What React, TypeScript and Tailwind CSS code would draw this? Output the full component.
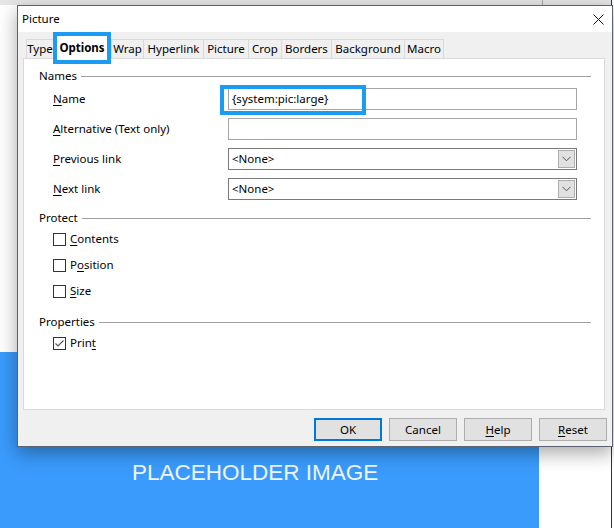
import React from "react";

const UI = "font-['Noto_Sans',sans-serif] text-[11.5px] leading-none text-black";

function U({ children }: { children: React.ReactNode }) {
  return <span className="underline underline-offset-2 decoration-1">{children}</span>;
}

function SectionHeader({ title }: { title: string }) {
  return (
    <div className="h-[16px] flex items-center pl-[15px] pr-[13px]">
      <span>{title}</span>
      <div className="flex-1 h-px bg-[#a0a0a0] ml-[4px]" />
    </div>
  );
}

function Chevron() {
  return (
    <svg width="9" height="6" viewBox="0 0 9 6">
      <path d="M0.5 0.8 L4.5 4.8 L8.5 0.8" fill="none" stroke="#555" strokeWidth="1" />
    </svg>
  );
}

function Row({ label, children }: { label: React.ReactNode; children: React.ReactNode }) {
  return (
    <div className="h-[22px] flex items-center">
      <div className="w-[204px] pl-[29px]">{label}</div>
      <div className="w-[349px] h-[22px] relative">{children}</div>
    </div>
  );
}

function TextBox({ value }: { value?: string }) {
  return (
    <div className="w-full h-full border border-[#a6a6a6] bg-white flex items-center pl-[3px]">{value}</div>
  );
}

function SelectBox({ value }: { value: string }) {
  return (
    <div className="w-full h-full border border-[#7a7a7a] bg-white flex items-center pl-[3px] pr-[1px]">
      <span className="flex-1">{value}</span>
      <div className="w-[17px] h-[18px] bg-[#e1e1e1] border border-[#adadad] flex items-center justify-center">
        <Chevron />
      </div>
    </div>
  );
}

function Check({ checked, label }: { checked?: boolean; label: React.ReactNode }) {
  return (
    <div className="h-[16px] flex items-center pl-[29px]">
      <div className="w-[13px] h-[13px] border border-[#333] bg-white flex items-center justify-center">
        {checked && (
          <svg width="11" height="11" viewBox="0 0 11 11">
            <path d="M1.5 5.5 L4 8 L9.5 2.5" fill="none" stroke="#555" strokeWidth="1.1" />
          </svg>
        )}
      </div>
      <span className="ml-[4px]">{label}</span>
    </div>
  );
}

function Tab({ w, children }: { w: number; children: React.ReactNode }) {
  return (
    <div
      className="h-[19px] border-t border-l border-[#d9d9d9] bg-[#f0f0f0] flex items-center justify-center last:border-r"
      style={{ width: w }}
    >
      {children}
    </div>
  );
}

function Button({ children, def }: { children: React.ReactNode; def?: boolean }) {
  return (
    <div
      className={
        def
          ? "w-[68px] h-[23px] bg-[#e1e1e1] border-2 border-[#0078d7] flex items-center justify-center"
          : "w-[68px] h-[23px] bg-[#e1e1e1] border border-[#adadad] flex items-center justify-center"
      }
    >
      {children}
    </div>
  );
}

function Dialog() {
  return (
    <div className={`absolute left-[17px] top-[5px] w-[596px] h-[442px] border border-[#5a6370] bg-[#f0f0f0] flex flex-col shadow-[0_6px_18px_rgba(0,0,0,0.35)] ${UI}`}>
      <div className="h-[26px] bg-white flex items-center pl-[4px] pr-[8px]">
        <span className="flex-1">Picture</span>
        <svg width="11" height="11" viewBox="0 0 11 11">
          <path d="M0.5 0.5 L10.5 10.5 M10.5 0.5 L0.5 10.5" stroke="#111" strokeWidth="1" />
        </svg>
      </div>
      <div className="flex-1 flex flex-col pl-[5px] pr-[7px] pt-[7px]">
        <div className="h-[19px] flex pl-[3px]">
          <Tab w={27}>Type</Tab>
          <div className="w-[58px] h-[19px] relative">
            <div className="absolute left-0 top-[-7px] w-[58px] h-[32px] border-[4px] border-[#1b9cf2] bg-white flex items-center justify-center z-10 font-bold">
              Options
            </div>
          </div>
          <Tab w={32}>Wrap</Tab>
          <Tab w={60}>Hyperlink</Tab>
          <Tab w={45}>Picture</Tab>
          <Tab w={33}>Crop</Tab>
          <Tab w={50}>Borders</Tab>
          <Tab w={73}>Background</Tab>
          <Tab w={40}>Macro</Tab>
        </div>
        <div className="h-[352px] border border-[#d9d9d9] bg-white flex flex-col pt-[9px]">
          <SectionHeader title="Names" />
          <div className="flex flex-col gap-[8px] mt-[4px]">
            <Row label={<><U>N</U>ame</>}>
              <TextBox value="{system:pic:large}" />
              <div className="absolute left-[-8px] top-[-3px] w-[146px] h-[30px] border-[4px] border-[#1b9cf2]" />
            </Row>
            <Row label={<><U>A</U>lternative (Text only)</>}>
              <TextBox />
            </Row>
            <Row label={<><U>P</U>revious link</>}>
              <SelectBox value="<None>" />
            </Row>
            <Row label={<><U>N</U>ext link</>}>
              <SelectBox value="<None>" />
            </Row>
          </div>
          <div className="mt-[10px]">
            <SectionHeader title="Protect" />
          </div>
          <div className="flex flex-col gap-[10px] mt-[5px]">
            <Check label={<><U>C</U>ontents</>} />
            <Check label={<>P<U>o</U>sition</>} />
            <Check label={<><U>S</U>ize</>} />
          </div>
          <div className="mt-[15px]">
            <SectionHeader title="Properties" />
          </div>
          <div className="mt-[5px]">
            <Check checked label={<>Prin<U>t</U></>} />
          </div>
        </div>
        <div className="flex justify-end gap-[7px] mt-[8px] mr-[-2px]">
          <Button def>OK</Button>
          <Button>Cancel</Button>
          <Button><U>H</U>elp</Button>
          <Button><U>R</U>eset</Button>
        </div>
      </div>
    </div>
  );
}

export default function App() {
  return (
    <div className="w-[614px] h-[528px] flex bg-white relative overflow-hidden">
      <div className="w-[611px] flex flex-col">
        <div className="h-[5px] bg-[#e6e6e6] flex">
          <div className="w-[543px] border-r border-[#a8a8a8]" />
        </div>
        <div className="h-[347px]" />
        <div className="w-[539px] flex-1 bg-[#3a9bfc] pt-[110px] pl-[132px]">
          <span className="font-['Liberation_Sans',Arial,sans-serif] text-[22.5px] leading-none text-[#eef6ff]">
            PLACEHOLDER IMAGE
          </span>
        </div>
      </div>
      <div className="w-px bg-[#333]" />
      <div className="flex-1" />
      <Dialog />
    </div>
  );
}
